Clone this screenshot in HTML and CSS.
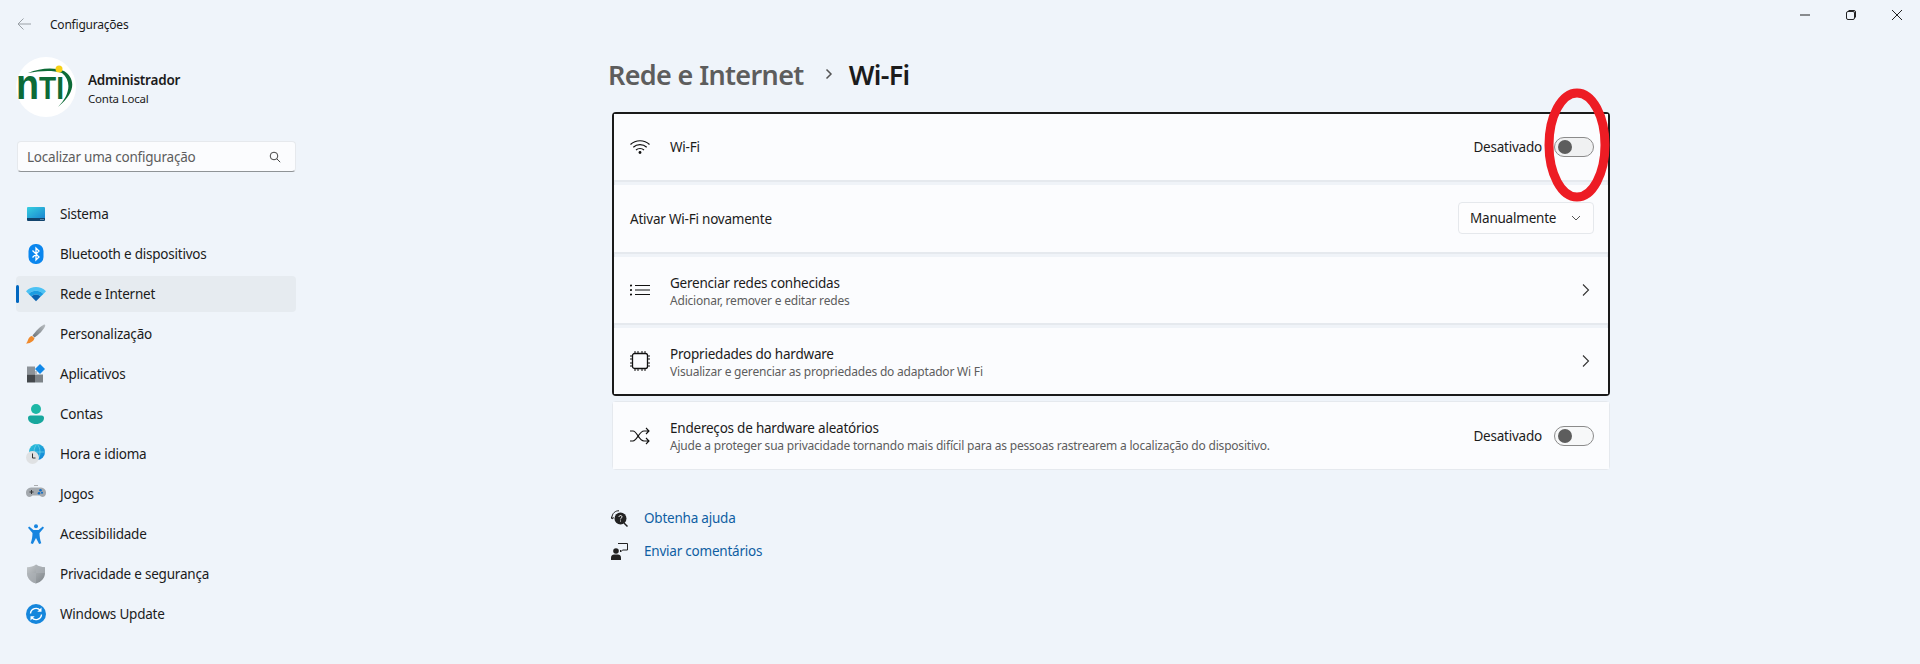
FILE: index.html
```html
<!DOCTYPE html>
<html lang="pt-BR">
<head>
    <meta charset="UTF-8">
    <title>Configurações</title>
    <link rel="stylesheet" href="styles.css">
</head>
<body>

<!-- Barra de titulo -->
<div class="titlebar">
    <div class="app-title">
        <svg class="back" width="16" height="16" viewBox="0 0 16 16"><path d="M15 8H2M7.500 2.500 2 8l5.500 5.500" fill="none" stroke="#9aa0a6" stroke-width="1"/></svg>
        <span>Configurações</span>
    </div>
    <div class="win-controls">
        <button class="win-btn"><svg width="10" height="10" viewBox="0 0 10 10"><path d="M0 5h10" stroke="#222" stroke-width="1"/></svg></button>
        <button class="win-btn"><svg width="10" height="10" viewBox="0 0 10 10"><rect x=".5" y="1.500" width="8" height="8" rx="1.500" fill="none" stroke="#222"/><path d="M2.500.5h5.500a1.500 1.500 0 0 1 1.500 1.500v5.500" fill="none" stroke="#222"/></svg></button>
        <button class="win-btn"><svg width="10" height="10" viewBox="0 0 10 10"><path d="M0 0l10 10M10 0 0 10" stroke="#222" stroke-width="1"/></svg></button>
    </div>
</div>

<div class="app">
    <!-- Menu lateral -->
    <aside class="sidebar">
        <div class="profile">
            <svg class="avatar" width="60" height="60" viewBox="0 0 60 60">
                <circle cx="30" cy="30" r="30" fill="#fff"/>
                <path d="M12 16C24 11 38 10 48 14 58 20 62 34 42 50 54 38 56 24 46 16 36 13 24 14 12 16Z" fill="#0d6b37"/>
                <text class="logo-text" x="0" y="42" textLength="48" lengthAdjust="spacingAndGlyphs"><tspan class="logo-n">n</tspan>TI</text>
                <circle cx="43" cy="12" r="3.500" fill="#f7d117"/>
            </svg>
            <div class="profile-text">
                <div class="profile-name">Administrador</div>
                <div class="profile-type">Conta Local</div>
            </div>
        </div>

        <div class="search">
            <span>Localizar uma configuração</span>
            <svg width="12" height="12" viewBox="0 0 12 12"><circle cx="5" cy="5" r="3.800" fill="none" stroke="#444" stroke-width="1"/><path d="m7.800 7.800 3.400 3.400" stroke="#444" stroke-width="1"/></svg>
        </div>

        <nav class="nav">
            <a class="nav-item">
                <svg width="20" height="20" viewBox="0 0 20 20">
                    <defs><linearGradient id="g-sis" x1="0" y1="0" x2="1" y2="1"><stop offset="0" stop-color="#36cfe0"/><stop offset="1" stop-color="#1a86d0"/></linearGradient></defs>
                    <path d="M1 4a1 1 0 0 1 1-1h16a1 1 0 0 1 1 1v10H1Z" fill="url(#g-sis)"/>
                    <path d="M1 14h18v2a1 1 0 0 1-1 1H2a1 1 0 0 1-1-1Z" fill="#12446d"/>
                    <path d="M14.500 15.500h1M16.500 15.500h1" stroke="#9fc6e0" stroke-width="1"/>
                </svg>
                <span>Sistema</span>
            </a>
            <a class="nav-item">
                <svg width="20" height="20" viewBox="0 0 20 20">
                    <rect x="2.500" y="0" width="15" height="20" rx="7" fill="#0a86ee"/>
                    <path d="M6.500 6.500 13 13l-3 3V4l3 3-6.500 6.500" fill="none" stroke="#fff" stroke-width="1.300"/>
                </svg>
                <span>Bluetooth e dispositivos</span>
            </a>
            <a class="nav-item active">
                <svg width="20" height="20" viewBox="0 0 20 20">
                    <path d="M0 7.200C5.500 1.600 14.500 1.600 20 7.200l-2.600 2.700C13.300 5.700 6.700 5.700 2.600 9.900Z" fill="#4cc2f4"/>
                    <path d="M2.600 9.900C6.700 5.700 13.300 5.700 17.400 9.900l-2.700 2.700C12 9.900 8 9.900 5.300 12.600Z" fill="#1b9de2"/>
                    <path d="M5.300 12.600C8 9.900 12 9.900 14.700 12.600L10 17.200Z" fill="#0a62b0"/>
                </svg>
                <span>Rede e Internet</span>
            </a>
            <a class="nav-item">
                <svg width="20" height="20" viewBox="0 0 20 20">
                    <defs><linearGradient id="g-pin" x1="0" y1="1" x2="1" y2="0"><stop offset="0" stop-color="#6d7378"/><stop offset="1" stop-color="#b9bec2"/></linearGradient></defs>
                    <path d="M18 .5c1 0 1.500 .7 1.200 1.500C17.500 6 13 10.500 8.500 13.500L6.500 11.500C9.500 7.500 14 2.500 18 .5Z" fill="url(#g-pin)"/>
                    <path d="M6 12l2.500 2.200C7.500 18 3 19.500 0 19.500c1.500-1.200 1.700-3 2.500-4.700C3.200 13.300 4.500 12.300 6 12Z" fill="#f08a2c"/>
                </svg>
                <span>Personalização</span>
            </a>
            <a class="nav-item">
                <svg width="20" height="20" viewBox="0 0 20 20">
                    <rect x="1" y="2.500" width="8" height="8" fill="#8c9298"/>
                    <rect x="1" y="10.500" width="8" height="8" fill="#44484c"/>
                    <rect x="9" y="10.500" width="8" height="8" fill="#7d8388"/>
                    <rect x="9" y="7" width="2" height="3.500" fill="#b9bdc1"/>
                    <path d="M14 0l5 5-5 5-5-5Z" fill="#1188e8"/>
                </svg>
                <span>Aplicativos</span>
            </a>
            <a class="nav-item">
                <svg width="20" height="20" viewBox="0 0 20 20">
                    <circle cx="10" cy="5" r="5" fill="#1db7a6"/>
                    <path d="M2 14a2.500 2.500 0 0 1 2.500-2.500h11A2.500 2.500 0 0 1 18 14c0 3.500-3.500 6-8 6s-8-2.500-8-6Z" fill="#17a79d"/>
                </svg>
                <span>Contas</span>
            </a>
            <a class="nav-item">
                <svg width="20" height="20" viewBox="0 0 20 20">
                    <defs><linearGradient id="g-glb" x1="0" y1="0" x2="1" y2="1"><stop offset="0" stop-color="#2fc6d8"/><stop offset="1" stop-color="#0f7fd8"/></linearGradient></defs>
                    <circle cx="11" cy="8" r="8" fill="url(#g-glb)"/>
                    <path d="M11 0c-4 4-4 12 0 16M11 0c4 4 4 12 0 16M3 8h16" fill="none" stroke="#7fdcec" stroke-width=".6"/>
                    <circle cx="6.500" cy="13.500" r="6.500" fill="#dfe1e3"/>
                    <path d="M6.500 9.500v4.500h3" fill="none" stroke="#333" stroke-width="1"/>
                </svg>
                <span>Hora e idioma</span>
            </a>
            <a class="nav-item">
                <svg width="20" height="20" viewBox="0 0 20 20">
                    <path d="M5 3.500h10a5 5 0 0 1 5 5.500c0 2.500-1.800 4-3.500 4-1.200 0-2-1-3-1.500h-7c-1 .5-1.800 1.500-3 1.500C1.800 13 0 11.500 0 9a5 5 0 0 1 5-5.500Z" fill="#a4a9ae"/>
                    <path d="M3.500 8h4M5.500 6v4" stroke="#33373a" stroke-width="1"/>
                    <circle cx="14.500" cy="6.200" r="1.300" fill="#0f6cc4"/>
                    <circle cx="13" cy="9.200" r="1.300" fill="#0f6cc4"/>
                    <circle cx="16" cy="8.700" r="1" fill="#0f6cc4"/>
                    <path d="M8.500 1.500h1M10.500 1.500h1" stroke="#666" stroke-width="1"/>
                </svg>
                <span>Jogos</span>
            </a>
            <a class="nav-item">
                <svg width="20" height="20" viewBox="0 0 20 20">
                    <circle cx="10" cy="2.200" r="2" fill="#1785e0"/>
                    <path d="M2 3.800 3.200 2.500 7.500 6h5l4.300-3.500L18 3.800l-4.500 5.200c0 3.500 .6 7 1.800 10.300l-2.200.7L10 14l-3.100 6-2.200-.7C5.900 16 6.500 12.500 6.500 9Z" fill="#1785e0"/>
                </svg>
                <span>Acessibilidade</span>
            </a>
            <a class="nav-item">
                <svg width="20" height="20" viewBox="0 0 20 20">
                    <defs><linearGradient id="g-shd" x1="0" y1="0" x2="1" y2="1"><stop offset="0" stop-color="#c6cacd"/><stop offset="1" stop-color="#7d8388"/></linearGradient></defs>
                    <path d="M10 .5c2.500 2 5.500 2.500 9 2.700V9c0 5-3.500 9-9 10.500C4.500 18 1 14 1 9V3.200C4.500 3 7.500 2.500 10 .5Z" fill="url(#g-shd)"/>
                    <path d="M10 .5v19C4.500 18 1 14 1 9h18V3.200C15.500 3 12.500 2.500 10 .5Z" fill="#aeb3b7" opacity=".6"/>
                </svg>
                <span>Privacidade e segurança</span>
            </a>
            <a class="nav-item">
                <svg width="20" height="20" viewBox="0 0 20 20">
                    <circle cx="10" cy="10" r="10" fill="#1586dc"/>
                    <path d="M4.500 9.500A5.500 5.500 0 0 1 14.300 6.500M15.500 10.500A5.500 5.500 0 0 1 5.700 13.500" fill="none" stroke="#fff" stroke-width="1.400"/>
                    <path d="M15.500 3.500v4.200h-4.200ZM4.500 16.500v-4.200h4.200Z" fill="#fff"/>
                </svg>
                <span>Windows Update</span>
            </a>
        </nav>
    </aside>

    <!-- Conteudo -->
    <main class="main">
        <h1 class="breadcrumb">
            <span class="crumb-parent">Rede e Internet</span>
            <svg class="crumb-sep" width="10" height="12" viewBox="0 0 10 12"><path d="m2.500 1.500 4.500 4.500-4.500 4.500" fill="none" stroke="#555" stroke-width="1.500"/></svg>
            <span>Wi-Fi</span>
        </h1>

        <div class="card card-focus">
            <div class="row">
                <svg class="row-icon" width="20" height="20" viewBox="0 0 20 20">
                    <path d="M.5 7.500c5.200-5 13.800-5 19 0M3.300 10.300c3.700-3.500 9.700-3.500 13.400 0M6 13c2.200-2 5.800-2 8 0" fill="none" stroke="#111" stroke-width="1.200"/>
                    <circle cx="10" cy="15.500" r="1.400" fill="#111"/>
                </svg>
                <div class="row-text"><div class="row-title">Wi-Fi</div></div>
                <span class="state">Desativado</span>
                <div class="toggle"></div>
            </div>
            <div class="row">
                <div class="row-text"><div class="row-title">Ativar Wi-Fi novamente</div></div>
                <div class="dropdown">
                    <span>Manualmente</span>
                    <svg width="10" height="10" viewBox="0 0 10 10"><path d="m1 3 4 4 4-4" fill="none" stroke="#555" stroke-width="1"/></svg>
                </div>
            </div>
            <div class="row">
                <svg class="row-icon" width="20" height="20" viewBox="0 0 20 20">
                    <path d="M5 5.500h15M5 10h15M5 14.500h15" stroke="#111" stroke-width="1.100"/>
                    <circle cx="1" cy="5.500" r="1.100" fill="#111"/><circle cx="1" cy="10" r="1.100" fill="#111"/><circle cx="1" cy="14.500" r="1.100" fill="#111"/>
                </svg>
                <div class="row-text">
                    <div class="row-title">Gerenciar redes conhecidas</div>
                    <div class="row-sub">Adicionar, remover e editar redes</div>
                </div>
                <svg class="chevron" width="12" height="12" viewBox="0 0 12 12"><path d="m3 .5 5.500 5.500L3 11.500" fill="none" stroke="#333" stroke-width="1.100"/></svg>
            </div>
            <div class="row row-last">
                <svg class="row-icon" width="20" height="20" viewBox="0 0 20 20">
                    <rect x="2.500" y="2.500" width="15" height="15" rx="2" fill="none" stroke="#111" stroke-width="1.300"/>
                    <path d="M5 0v2.500M8 0v2.500M12 0v2.500M15 0v2.500M5 17.500V20M8 17.500V20M12 17.500V20M15 17.500V20M0 5h2.500M0 8h2.500M0 12h2.500M0 15h2.500M17.500 5H20M17.500 8H20M17.500 12H20M17.500 15H20" stroke="#111" stroke-width="1"/>
                </svg>
                <div class="row-text">
                    <div class="row-title">Propriedades do hardware</div>
                    <div class="row-sub">Visualizar e gerenciar as propriedades do adaptador Wi Fi</div>
                </div>
                <svg class="chevron" width="12" height="12" viewBox="0 0 12 12"><path d="m3 .5 5.500 5.500L3 11.500" fill="none" stroke="#333" stroke-width="1.100"/></svg>
            </div>
        </div>

        <div class="card card-single">
            <div class="row">
                <svg class="row-icon" width="20" height="20" viewBox="0 0 20 20">
                    <path d="M0 5h3c4 0 6 10 11 10h5M0 15h3c4 0 6-10 11-10h5M16 2l3 3-3 3M16 12l3 3-3 3" fill="none" stroke="#111" stroke-width="1.100"/>
                </svg>
                <div class="row-text">
                    <div class="row-title">Endereços de hardware aleatórios</div>
                    <div class="row-sub">Ajude a proteger sua privacidade tornando mais difícil para as pessoas rastrearem a localização do dispositivo.</div>
                </div>
                <span class="state">Desativado</span>
                <div class="toggle toggle-light"></div>
            </div>
        </div>

        <div class="links">
            <a class="link">
                <svg width="17" height="17" viewBox="0 0 17 17">
                    <path d="M1 8.500C.5 3 5 .5 8 .8" fill="none" stroke="#222" stroke-width="1"/>
                    <path d="M.2 6.500 1 9l2-1.500" fill="none" stroke="#222" stroke-width="1"/>
                    <circle cx="9.500" cy="8.500" r="6" fill="#222"/>
                    <path d="m13 13 3.500 3.500" stroke="#222" stroke-width="1.500"/>
                    <path d="M8 7c0-2 3-2 3 0 0 1-1.500 1-1.500 2.300M9.500 10.500v1" fill="none" stroke="#fff" stroke-width="1"/>
                </svg>
                <span>Obtenha ajuda</span>
            </a>
            <a class="link">
                <svg width="17" height="17" viewBox="0 0 17 17">
                    <circle cx="5" cy="8" r="2.800" fill="#222"/>
                    <path d="M0 17v-2.500C0 12.500 1.500 11.500 3 11.500h4c1.500 0 3 1 3 3V17Z" fill="#222"/>
                    <path d="M7 .5h9.500v6.500h-5l-2 2V7" fill="none" stroke="#222" stroke-width="1"/>
                </svg>
                <span>Enviar comentários</span>
            </a>
        </div>
    </main>
</div>

<!-- Marcacao vermelha feita sobre a captura -->
<svg class="markup" width="66" height="114" viewBox="0 0 66 114">
    <ellipse cx="33" cy="57" rx="28" ry="52" fill="none" stroke="#ed1c24" stroke-width="9"/>
</svg>

</body>
</html>
```

FILE: styles.css
```css
body {
    margin: 0;
    width: 1920px;
    height: 664px;
    overflow: hidden;
    position: relative;
    background-color: #eff4fa;
    color: #1b1b1b;
    font-family: "Noto Sans", "Open Sans", sans-serif;
    font-size: 13.5px;
    letter-spacing: -0.22px;
}
.titlebar {
    display: flex;
    justify-content: space-between;
    height: 48px;
}
.app-title {
    display: flex;
    align-items: center;
    font-size: 12px;
    padding-left: 16px;
}
.back {
    margin-right: 18px;
}
.win-controls {
    display: flex;
    height: 30px;
}
.win-btn {
    width: 46px;
    height: 30px;
    padding: 0;
    border: none;
    background: none;
    display: flex;
    align-items: center;
    justify-content: center;
}
.app {
    display: flex;
}
.sidebar {
    width: 280px;
    margin-left: 16px;
    flex-shrink: 0;
}
.profile {
    display: flex;
    align-items: center;
    gap: 12px;
    margin-top: 9px;
}
.logo-text {
    font-family: "Liberation Sans", sans-serif;
    font-weight: bold;
    font-size: 32px;
    fill: #0d6b37;
    letter-spacing: 0;
}
.logo-n {
    font-size: 43px;
}
.profile-name {
    font-weight: 600;
    font-size: 13.5px;
    line-height: 19px;
    margin-top: 3px;
}
.profile-type {
    font-size: 11.5px;
    line-height: 17px;
}
.search {
    display: flex;
    align-items: center;
    justify-content: space-between;
    width: 279px;
    height: 31px;
    box-sizing: border-box;
    margin: 24px 0 24px 1px;
    padding: 0 14px 0 9px;
    background-color: #fbfcfe;
    border: 1px solid #e6e9ed;
    border-bottom: 1px solid #8f9396;
    border-radius: 4px;
    color: #5d5d5d;
}
.nav {
    display: flex;
    flex-direction: column;
    gap: 4px;
}
.nav-item {
    display: flex;
    align-items: center;
    gap: 14px;
    height: 36px;
    padding-left: 10px;
    border-radius: 4px;
    position: relative;
}
.nav-item.active {
    background-color: #e6ebf0;
}
.nav-item.active::before {
    content: "";
    position: absolute;
    left: 0;
    top: 9px;
    width: 3px;
    height: 18px;
    border-radius: 2px;
    background-color: #0067c0;
}
.main {
    margin-left: 316px;
    width: 998px;
}
.breadcrumb {
    display: flex;
    align-items: center;
    height: 36px;
    margin: 8px 0 20px -4px;
    font-size: 27px;
    font-weight: 600;
    letter-spacing: -0.65px;
}
.crumb-parent {
    color: #5d5d5d;
}
.crumb-sep {
    margin: 0 15px 0 20px;
}
.card {
    background-color: #fbfcfe;
    border-radius: 4px;
    box-sizing: border-box;
}
.card-focus {
    height: 284px;
    border: 2px solid #1a1a1a;
    display: flex;
    flex-direction: column;
    background-color: #e5e9ee;
}
.card-single {
    height: 69px;
    margin-top: 5px;
    border: 1px solid #e5e9ee;
    display: flex;
}
.row {
    display: flex;
    align-items: center;
    flex: 1;
    padding: 0 14px 0 16px;
    background-color: #fbfcfe;
}
.card-single .row {
    padding: 0 15px 0 17px;
}
.card-focus .row + .row {
    margin-top: 5px;
    box-shadow: 0 -4px 0 -1px #eff3f8;
}
.card-focus .row + .row .row-text {
    padding-top: 2px;
}
.card-focus .row-last .row-text {
    padding-top: 4px;
}
.row-icon {
    margin-right: 20px;
    flex-shrink: 0;
}
.row-text {
    flex: 1;
}
.row-title {
    line-height: 19px;
}
.row-sub {
    font-size: 12px;
    line-height: 15px;
    letter-spacing: -0.2px;
    color: #5d5d5d;
}
.state {
    margin-right: 12px;
}
.toggle {
    width: 40px;
    height: 20px;
    box-sizing: border-box;
    border: 1px solid #8b8b8b;
    border-radius: 10px;
    background-color: #f0f1f2;
    position: relative;
}
.toggle::after {
    content: "";
    position: absolute;
    left: 3px;
    top: 2px;
    width: 14px;
    height: 14px;
    border-radius: 50%;
    background-color: #5d5d5d;
}
.toggle-light {
    background-color: #f7f8f9;
}
.dropdown {
    display: flex;
    align-items: center;
    justify-content: space-between;
    width: 136px;
    height: 32px;
    box-sizing: border-box;
    padding: 0 12px 0 11px;
    background-color: #fdfdfe;
    border: 1px solid #e5e8ec;
    border-radius: 4px;
}
.chevron {
    margin-right: 2px;
}
.links {
    margin: 35px 0 0 -1px;
    display: flex;
    flex-direction: column;
    gap: 7px;
}
.link {
    display: flex;
    align-items: center;
    gap: 16px;
    height: 26px;
    color: #0f5fa3;
}
.markup {
    position: absolute;
    left: 1544px;
    top: 88px;
}
```
